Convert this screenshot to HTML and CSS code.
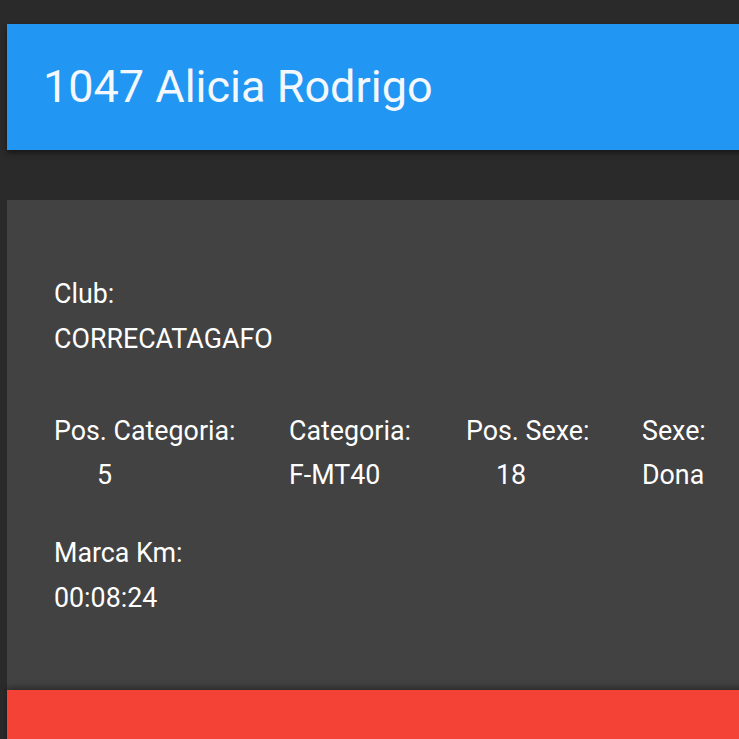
FILE: index.html
```html
<!DOCTYPE html>
<html lang="ca">

<head>
    <meta charset="UTF-8">
    <meta name="viewport" content="width=device-width, initial-scale=1.0">
    <title>1047 Alicia Rodrigo</title>
    <link rel="stylesheet" href="styles.css">
</head>

<body>
    <header class="title-bar">
        <h1>1047 Alicia Rodrigo</h1>
    </header>

    <section class="card">
        <div class="field">
            <span class="label">Club:</span>
            <span class="value">CORRECATAGAFO</span>
        </div>

        <div class="row">
            <div class="field col-pos-cat">
                <span class="label">Pos. Categoria:</span>
                <span class="value indent-cat">5</span>
            </div>
            <div class="field col-cat">
                <span class="label">Categoria:</span>
                <span class="value">F-MT40</span>
            </div>
            <div class="field col-pos-sex">
                <span class="label">Pos. Sexe:</span>
                <span class="value indent-sex">18</span>
            </div>
            <div class="field">
                <span class="label">Sexe:</span>
                <span class="value">Dona</span>
            </div>
        </div>

        <div class="field last">
            <span class="label">Marca Km:</span>
            <span class="value">00:08:24</span>
        </div>
    </section>

    <section class="next-bar"></section>
</body>

</html>
```

FILE: styles.css
```css
html,
body {
    margin: 0;
    padding: 0;
    height: 100%;
    overflow: hidden;
}

body {
    background-color: #2a2a2a;
    font-family: Roboto, "Liberation Sans", sans-serif;
    color: #ffffff;
    padding-top: 24px;
    padding-left: 7px;
    box-sizing: border-box;
}

.title-bar {
    height: 126px;
    margin-right: -20px;
    background-color: #2196f3;
    box-shadow: 0 3px 5px rgba(0, 0, 0, 0.45);
    display: flex;
    align-items: center;
    padding-left: 36px;
}

.title-bar h1 {
    margin: 0;
    font-size: 45px;
    font-weight: 400;
    color: #f4f8fc;
    position: relative;
    top: -1px;
}

.card {
    margin-top: 50px;
    margin-right: -20px;
    height: 490px;
    background-color: #424242;
    box-sizing: border-box;
    padding: 78px 0 0 47px;
    display: flex;
    flex-direction: column;
}

.field {
    display: flex;
    flex-direction: column;
    gap: 13px;
    font-size: 26.8px;
    line-height: 32px;
}

.row {
    display: flex;
    margin-top: 60px;
}

.row .field {
    gap: 12px;
}

.field.last {
    margin-top: 46px;
}

.col-pos-cat {
    width: 235px;
}

.col-cat {
    width: 177px;
}

.col-pos-sex {
    width: 176px;
}

.indent-cat {
    padding-left: 43px;
}

.indent-sex {
    padding-left: 30px;
}

.next-bar {
    height: 60px;
    margin-right: -20px;
    background-color: #f44336;
    box-shadow: 0 -3px 6px rgba(0, 0, 0, 0.35);
    position: relative;
}
```
